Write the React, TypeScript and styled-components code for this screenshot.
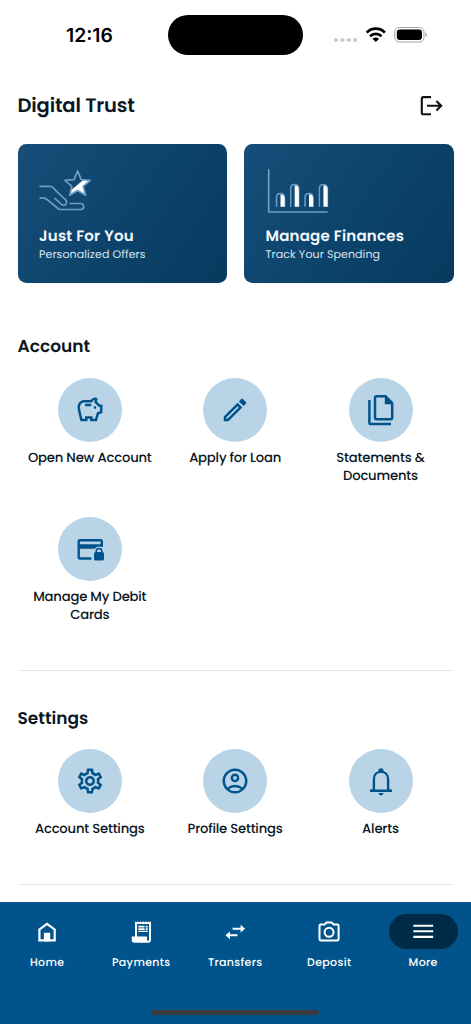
import React from 'react';
import styled, { createGlobalStyle } from 'styled-components';
import {
  MdMenu,
  MdOutlineAccountCircle,
  MdOutlineEdit,
  MdOutlineSavings,
  MdOutlineSettings,
} from 'react-icons/md';

const GlobalStyle = createGlobalStyle`
  * {
    box-sizing: border-box;
  }

  body {
    margin: 0;
    background: #fff;
    color: #0b1722;
    font-family: Poppins, Inter, sans-serif;
    text-rendering: geometricPrecision;
  }
`;

const Screen = styled.div`
  width: 471px;
  height: 1024px;
  display: flex;
  flex-direction: column;
  overflow: hidden;
`;

const StatusBar = styled.header`
  height: 70px;
  padding: 15px 43px 0 66px;
  display: grid;
  grid-template-columns: 102.3px 134.4px 1fr;
  align-items: start;
`;

const Time = styled.div`
  font: 600 19.3px/41px Inter, sans-serif;
  letter-spacing: 0;
  color: #000;
`;

const Island = styled.div`
  height: 39.5px;
  border-radius: 20px;
  background: #000;
`;

const Indicators = styled.div`
  height: 40px;
  display: flex;
  align-items: center;
  justify-content: flex-end;

  svg {
    display: block;
  }
`;

const TitleBar = styled.div`
  height: 70px;
  padding: 1px 28px 0 17.5px;
  display: flex;
  align-items: center;
  justify-content: space-between;
`;

const Title = styled.h1`
  margin: 0;
  font-size: 19.5px;
  font-weight: 600;
  line-height: 28px;
  letter-spacing: -0.15px;
`;

const Cards = styled.div`
  padding: 3.7px 17.5px 0;
  display: grid;
  grid-template-columns: 1fr 1fr;
  gap: 17px;
`;

const PromoCard = styled.div`
  height: 139px;
  padding: 24px 21.5px 0;
  border-radius: 8.5px;
  background: linear-gradient(125deg, #164e79 0%, #0d446c 50%, #073a5f 100%);
  color: #f4f8fb;

  svg {
    display: block;
    margin-left: -0.5px;
  }
`;

const PromoTitle = styled.div`
  margin-top: 11.7px;
  font-size: 15px;
  font-weight: 600;
  line-height: 20px;
  letter-spacing: 0.22px;
  white-space: nowrap;
`;

const PromoText = styled.div`
  font-size: 11px;
  line-height: 14px;
  letter-spacing: 0.1px;
  color: #d9e5ee;
  white-space: nowrap;
`;

const Section = styled.section<{ $height: number; $top: number }>`
  height: ${(props) => props.$height}px;
  margin: 0 17.5px;
  padding-top: ${(props) => props.$top}px;
  border-bottom: 1px solid #e3e6ea;
`;

const SectionTitle = styled.h2`
  margin: 0 0 19.3px;
  font-size: 17px;
  font-weight: 600;
  line-height: 24px;
`;

const Actions = styled.div`
  display: grid;
  grid-template-columns: repeat(3, 1fr);
  row-gap: 31.3px;
`;

const Action = styled.div`
  display: flex;
  flex-direction: column;
  align-items: center;
`;

const Circle = styled.div`
  width: 64px;
  height: 64px;
  border-radius: 50%;
  display: flex;
  align-items: center;
  justify-content: center;
  background: #bad4e7;
  color: #00548b;
`;

const ActionLabel = styled.div`
  margin-top: 7px;
  display: flex;
  flex-direction: column;
  align-items: center;
  font-size: 13.2px;
  font-weight: 500;
  line-height: 18.3px;
  letter-spacing: -0.2px;
  white-space: nowrap;

  span {
    margin-right: 0.8px;
  }
`;

const TabBar = styled.nav`
  height: 122.5px;
  margin-top: auto;
  padding: 12.8px 0 0 0.2px;
  display: grid;
  grid-template-columns: repeat(5, 94px);
  grid-template-rows: 56px 1fr;
  background: #00548b;
  color: #fff;
`;

const Tab = styled.div`
  display: flex;
  flex-direction: column;
  align-items: center;
  font-size: 11px;
  font-weight: 500;
  line-height: 16px;
  letter-spacing: 0.35px;
`;

const TabIcon = styled.div<{ $active?: boolean }>`
  width: 69px;
  height: 34.5px;
  margin-bottom: 5px;
  border-radius: 18px;
  display: flex;
  align-items: center;
  justify-content: center;
  background: ${(props) => (props.$active ? '#002b48' : 'transparent')};
`;

const HomeIndicator = styled.div`
  grid-column: 1 / -1;
  align-self: end;
  justify-self: center;
  width: 168px;
  height: 5px;
  margin-bottom: 9px;
  border-radius: 3px;
  background: #3a3a3c;
`;

const StatusIcons = () => (
  <svg width="95" height="20" viewBox="333 25 95 20" fill="none">
    <g fill="#cbcbcb">
      <circle cx="336" cy="40" r="2.1" />
      <circle cx="342.4" cy="40" r="2.1" />
      <circle cx="348.8" cy="40" r="2.1" />
      <circle cx="355.1" cy="40" r="2.1" />
    </g>
    <g stroke="#000" strokeWidth="2.7">
      <path d="M366.7 32.6c5-5.2 13.2-5.2 18.2 0" />
      <path d="M370 36.3c3.3-3.2 8.3-3.2 11.6 0" />
    </g>
    <path d="M372.5 38.8c1.9-1.7 4.7-1.7 6.6 0l-3.3 3.3z" fill="#000" />
    <rect x="394.7" y="27.5" width="29.3" height="14.5" rx="4.5" stroke="#a3a3a3" />
    <rect x="396.8" y="29.6" width="25.2" height="10.3" rx="2.8" fill="#000" />
    <path d="M425.5 32.5c1.9.6 1.9 4 0 4.6z" fill="#a3a3a3" />
  </svg>
);

const LogoutIcon = () => (
  <svg width="24" height="24" viewBox="0 0 24 24" fill="none" stroke="#0b1214" strokeWidth="2.1">
    <path d="M12 3.1H4.4q-1.6 0-1.6 1.6v14q0 1.6 1.6 1.6H12" />
    <path d="M8 11.8h14M17.4 7l4.8 4.8-4.8 4.8" />
  </svg>
);

const OfferIcon = () => (
  <svg width="56" height="48" viewBox="0 -1.2 56 48" fill="none">
    <path d="M44.5 10.6l6.8.4-7.1 6.2 2.5 9.1-8-4.8-7.9 4.8.9-5z" fill="#fff" />
    <g stroke="#6d9dc5" strokeWidth="1.7" strokeLinecap="round" strokeLinejoin="round">
      <path d="M38.6 1.7l3.6 8.7 9 .7-7 6.1 2.4 8.9-8-4.8-7.9 4.8 2.2-8.9-7-6.1 9.1-.7z" />
      <path d="M1.2 17.2h10c2.5 0 3.9 2 5.8 4.5l9.2 8.5c3.2 3 .4 7-3 5.5-1-.4-1.7-1.3-2.5-2.2l-4.9-4.4" />
      <path d="M1.2 29h3.5c2 0 3 .9 4.5 2.2l11 9.1h21.5c4 0 4-6 0-6H31" />
    </g>
  </svg>
);

const bars = [
  { x: 11.5, top: 25.5 },
  { x: 25.7, top: 16.5 },
  { x: 40, top: 25.5 },
  { x: 54.4, top: 16.5 },
];

const ChartIcon = () => (
  <svg width="66" height="48" viewBox="0 0 66 48" fill="none">
    <path d="M3.7 1v43H62.7" stroke="#6d9dc5" strokeWidth="1.7" />
    {bars.map(({ x, top }) => (
      <g key={x}>
        <path
          d={`M${x} 38.7V${top + 4}q0-4 4-4t4 4V38.7`}
          stroke="#6d9dc5"
          strokeWidth="1.5"
        />
        <path d={`M${x + 4} 38.7V${top + 1}q3.8-.5 4.1 3.5V38.7z`} fill="#fff" />
      </g>
    ))}
  </svg>
);

const DocumentsIcon = () => (
  <svg width="64" height="64" viewBox="0 0 64 64" fill="none" stroke="currentColor" strokeWidth="2.5">
    <path d="M20.4 22v22.4q0 1.6 1.6 1.6h20" />
    <path d="M36.5 18.3h-8.8q-1.7 0-1.7 1.7v19.6q0 1.7 1.7 1.7h13.8q1.7 0 1.7-1.7V25z" />
    <path d="M35.8 18v8.3h8z" fill="currentColor" stroke="none" />
  </svg>
);

const CardLockIcon = () => (
  <svg width="64" height="64" viewBox="0 0 64 64" fill="none">
    <path
      d="M33.4 41.5H22q-1.3 0-1.3-1.3V24.6q0-1.3 1.3-1.3h20.5q1.3 0 1.3 1.3v5.2"
      stroke="currentColor"
      strokeWidth="2.4"
    />
    <path d="M20 27.3h24.8v2.8q-5.4-2-8.2 1.7H20z" fill="currentColor" />
    <rect x="36" y="35" width="10" height="8.5" rx="1.6" fill="currentColor" />
    <path d="M38.3 35.5v-1.4c0-3.5 5.4-3.5 5.4 0v1.4" stroke="currentColor" strokeWidth="1.7" />
  </svg>
);

const BellIcon = () => (
  <svg width="64" height="64" viewBox="0 0 64 64" fill="none">
    <path
      d="M24.9 42V30c0-9.5 14.2-9.5 14.2 0v12M21 41.8h22"
      stroke="currentColor"
      strokeWidth="2.4"
    />
    <path
      d="M29.4 23v-1.1a2.6 2.6 0 015.2 0V23zM29.6 44h4.8c0 3.2-4.8 3.2-4.8 0zM21 42.5l3.5-3.5v3.5zM43 42.5L39.5 39v3.5z"
      fill="currentColor"
    />
  </svg>
);

const HomeIcon = () => (
  <svg width="24" height="24" viewBox="0 0 24 24" fill="currentColor">
    <path d="M12 2.6L3.3 9v12.4h17.5V9zm0 2.6l6.6 4.9v9.1h-3.4v-6.5H8.9v6.5H5.5v-9.1z" />
    <path d="M9.2 13h5.8v8.4H9.2z" />
  </svg>
);

const PaymentsIcon = () => (
  <svg width="24" height="24" viewBox="0 0 24 24" fill="currentColor">
    <path d="M6 1.3l1.3 1.1 1.4-1.1L10 2.4l1.4-1.1 1.3 1.1L14 1.3l1.4 1.1 1.3-1.1 1.4 1.1 1.3-1.1 1.3 1.1L22 1.3V20q0 2.8-2.8 2.8H5.5q-2.8 0-2.8-2.8v-3.6H6zm2 2.8v12.3h10v3.6c0 1.1 2 1.1 2 0V4.1z" />
    <path d="M9.3 5.7h6.3v1.7H9.3zM16.7 5.7h2v1.7h-2zM9.3 8.3h6.3V10H9.3zM16.7 8.3h2V10h-2zM9.3 10.8h9.4v1.3H9.3z" />
  </svg>
);

const TransfersIcon = () => (
  <svg width="24" height="24" viewBox="0 0 24 24" fill="none">
    <path d="M9.6 8.7h8.7M14.4 15.3H6.2" stroke="currentColor" strokeWidth="2" />
    <path d="M17.6 4.8v7.8l4.5-3.9zM7 11.4v7.8l-4.6-3.9z" fill="currentColor" />
  </svg>
);

const DepositIcon = () => (
  <svg width="24" height="24" viewBox="0 0 24 24" fill="none" stroke="currentColor" strokeWidth="2">
    <path d="M7.7 4.4L9.5 2.5h5.2l1.8 1.9h3.8q1.3 0 1.3 1.3v13.4q0 1.3-1.3 1.3H3.8q-1.3 0-1.3-1.3V5.7q0-1.3 1.3-1.3z" />
    <circle cx="12.1" cy="12.3" r="4.5" />
  </svg>
);

type ActionItem = { icon: React.ReactNode; lines: string[] };

const accountActions: ActionItem[] = [
  { icon: <MdOutlineSavings size={30} />, lines: ['Open New Account'] },
  { icon: <MdOutlineEdit size={30} />, lines: ['Apply for Loan'] },
  { icon: <DocumentsIcon />, lines: ['Statements &', 'Documents'] },
  { icon: <CardLockIcon />, lines: ['Manage My Debit', 'Cards'] },
];

const settingsActions: ActionItem[] = [
  { icon: <MdOutlineSettings size={30} />, lines: ['Account Settings'] },
  { icon: <MdOutlineAccountCircle size={30} />, lines: ['Profile Settings'] },
  { icon: <BellIcon />, lines: ['Alerts'] },
];

const tabs: { icon: React.ReactNode; text: string; active?: boolean }[] = [
  { icon: <HomeIcon />, text: 'Home' },
  { icon: <PaymentsIcon />, text: 'Payments' },
  { icon: <TransfersIcon />, text: 'Transfers' },
  { icon: <DepositIcon />, text: 'Deposit' },
  { icon: <MdMenu size={26.5} />, text: 'More', active: true },
];

const ActionGrid: React.FC<{ items: ActionItem[] }> = ({ items }) => (
  <Actions>
    {items.map(({ icon, lines }) => (
      <Action key={lines[0]}>
        <Circle>{icon}</Circle>
        <ActionLabel>
          {lines.map((line) => (
            <span key={line}>{line}</span>
          ))}
        </ActionLabel>
      </Action>
    ))}
  </Actions>
);

const App: React.FC = () => {
  return (
    <Screen>
      <GlobalStyle />
      <StatusBar>
        <Time>12:16</Time>
        <Island />
        <Indicators>
          <StatusIcons />
        </Indicators>
      </StatusBar>
      <TitleBar>
        <Title>Digital Trust</Title>
        <LogoutIcon />
      </TitleBar>
      <Cards>
        <PromoCard>
          <OfferIcon />
          <PromoTitle>Just For You</PromoTitle>
          <PromoText>Personalized Offers</PromoText>
        </PromoCard>
        <PromoCard>
          <ChartIcon />
          <PromoTitle>Manage Finances</PromoTitle>
          <PromoText>Track Your Spending</PromoText>
        </PromoCard>
      </Cards>
      <Section $height={388.3} $top={51.7}>
        <SectionTitle>Account</SectionTitle>
        <ActionGrid items={accountActions} />
      </Section>
      <Section $height={214} $top={34.7}>
        <SectionTitle>Settings</SectionTitle>
        <ActionGrid items={settingsActions} />
      </Section>
      <TabBar>
        {tabs.map(({ icon, text, active }) => (
          <Tab key={text}>
            <TabIcon $active={active}>{icon}</TabIcon>
            {text}
          </Tab>
        ))}
        <HomeIndicator />
      </TabBar>
    </Screen>
  );
};

export default App;
